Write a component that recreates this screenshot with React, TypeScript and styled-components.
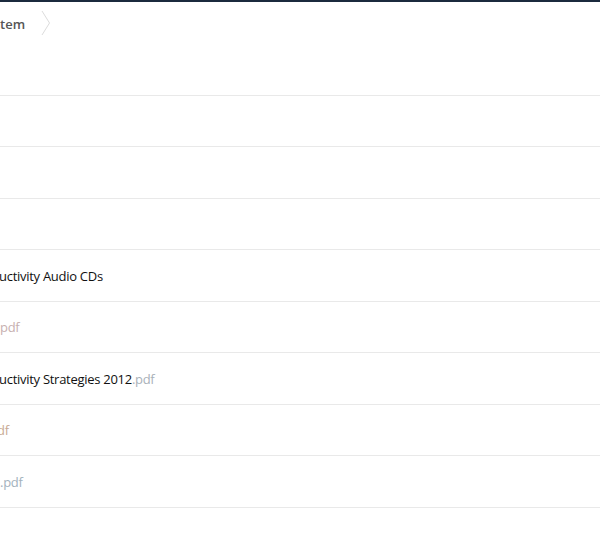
import styled, { createGlobalStyle } from 'styled-components';

interface FileRow {
  name: string;
  ext?: string;
  extColor?: string;
  clip?: number;
}

const rows: FileRow[] = [
  { name: '' },
  { name: '' },
  { name: '' },
  { name: 'uctivity Audio CDs', clip: 1 },
  { name: '', ext: 'pdf', extColor: '#c7b0b0' },
  { name: 'uctivity Strategies 2012', ext: '.pdf', extColor: '#a9b1b9', clip: 1 },
  { name: '', ext: 'df', extColor: '#c9ab95', clip: 3 },
  { name: '', ext: '.pdf', extColor: '#a3b2bd' },
];

const GlobalStyle = createGlobalStyle`
  html, body {
    margin: 0;
    padding: 0;
    background: #ffffff;
  }
  body {
    font-family: 'Open Sans', 'Noto Sans', sans-serif;
    font-size: 13px;
    color: #111;
  }
`;

const App = () => {
  return (
    <>
      <GlobalStyle />
      <Page>
        <Breadcrumb>
          <Crumb>tem</Crumb>
          <Chevron width="10" height="26" viewBox="0 0 10 26">
            <polyline
              points="1,1 8.5,13 1,25"
              fill="none"
              stroke="#dcdcdc"
              strokeWidth="1"
            />
          </Chevron>
        </Breadcrumb>
        <HeaderSpace />
        <List>
          {rows.map((row, i) => (
            <Row key={i}>
              <Name clip={row.clip ?? 0}>
                {row.name}
                {row.ext && <Ext color={row.extColor}>{row.ext}</Ext>}
              </Name>
            </Row>
          ))}
        </List>
      </Page>
    </>
  );
};

export default App;

const Page = styled.div`
  width: 600px;
  min-height: 557px;
  overflow: hidden;
  border-top: 2px solid #1b2a3e;
  box-sizing: border-box;
`;

const Breadcrumb = styled.div`
  display: flex;
  align-items: center;
  height: 44px;
  gap: 16px;
`;

const Crumb = styled.span`
  font-size: 13px;
  font-weight: 600;
  color: #555555;
  letter-spacing: 0.1px;
`;

const Chevron = styled.svg`
  display: block;
  margin-top: -2px;
`;

const HeaderSpace = styled.div`
  height: 49px;
`;

const List = styled.div`
  display: flex;
  flex-direction: column;
  border-bottom: 1px solid #e9e9e9;
`;

const Row = styled.div`
  display: flex;
  align-items: center;
  height: 50px;
  border-top: 1px solid #e9e9e9;

  &:nth-child(even) {
    height: 51px;
  }
`;

const Name = styled.span<{ clip: number }>`
  margin-left: ${({ clip }) => -clip}px;
  font-size: 13px;
  letter-spacing: -0.28px;
  color: #111111;
  white-space: nowrap;
`;

const Ext = styled.span<{ color?: string }>`
  color: ${({ color }) => color || '#aaaaaa'};
`;
